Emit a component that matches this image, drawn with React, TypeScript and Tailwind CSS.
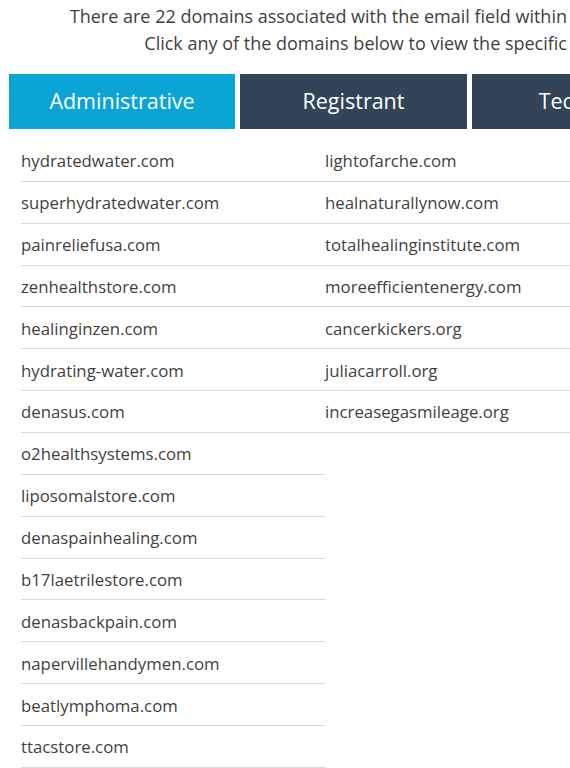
const left = [
  "hydratedwater.com",
  "superhydratedwater.com",
  "painreliefusa.com",
  "zenhealthstore.com",
  "healinginzen.com",
  "hydrating-water.com",
  "denasus.com",
  "o2healthsystems.com",
  "liposomalstore.com",
  "denaspainhealing.com",
  "b17laetrilestore.com",
  "denasbackpain.com",
  "napervillehandymen.com",
  "beatlymphoma.com",
  "ttacstore.com",
]

const right = [
  "lightofarche.com",
  "healnaturallynow.com",
  "totalhealinginstitute.com",
  "moreefficientenergy.com",
  "cancerkickers.org",
  "juliacarroll.org",
  "increasegasmileage.org",
]

function DomainColumn({ items }: { items: string[] }) {
  return (
    <ul className="w-[304px] shrink-0">
      {items.map((d) => (
        <li
          key={d}
          className="h-[41.86px] flex items-center pt-[1px] border-b border-[#d9d9d9] cursor-pointer hover:text-[#0aa4d5]"
        >
          {d}
        </li>
      ))}
    </ul>
  )
}

export default function App() {
  return (
    <div className="w-[570px] overflow-hidden bg-white text-[#3f3f3f] font-['Open_Sans',sans-serif]">
      {/* intro */}
      <div className="pt-[3px] pr-[3px] text-right text-[18px] leading-[27px] whitespace-nowrap">
        <p>There are 22 domains associated with the email field within</p>
        <p>Click any of the domains below to view the specific</p>
      </div>

      {/* tabs */}
      <div className="flex gap-[5px] ml-[9px] mt-[17px] w-[800px]">
        <button className="w-[226px] h-[55px] shrink-0 bg-[#0aa4d5] text-white text-[21.5px]">Administrative</button>
        <button className="w-[227px] h-[55px] shrink-0 bg-[#324457] text-white text-[21.5px]">Registrant</button>
        <button className="w-[227px] h-[55px] shrink-0 bg-[#324457] text-white text-[21.5px]">Technical</button>
      </div>

      {/* domain list */}
      <div className="flex ml-[21px] mt-[11px] w-[700px] text-[16.8px]">
        <DomainColumn items={left} />
        <DomainColumn items={right} />
      </div>
    </div>
  )
}
